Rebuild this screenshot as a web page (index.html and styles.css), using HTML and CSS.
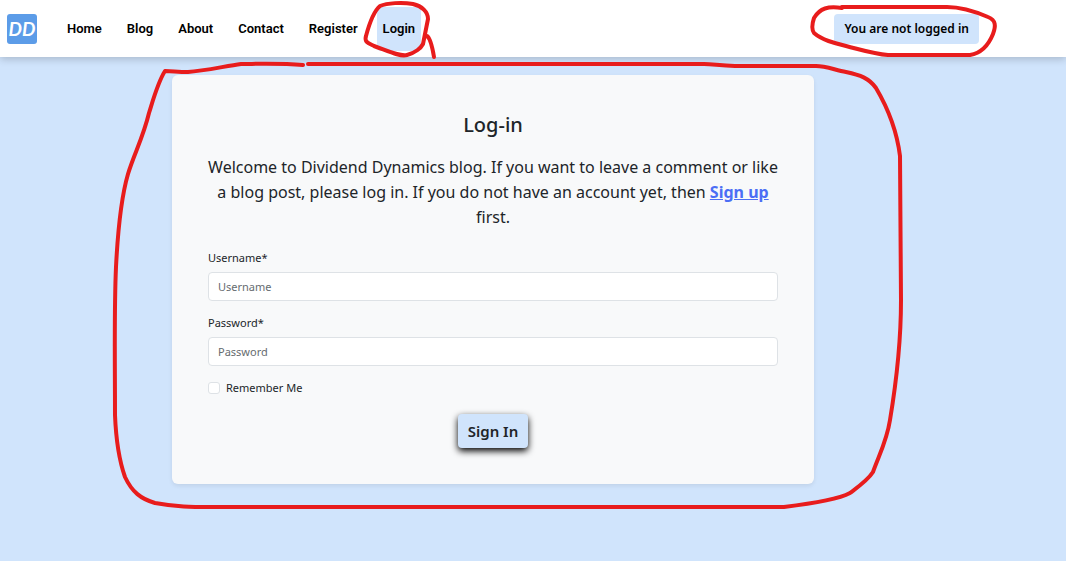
FILE: index.html
```html
<!DOCTYPE html>
<html lang="en">
<head>
<meta charset="utf-8">
<meta name="viewport" content="width=device-width, initial-scale=1">
<title>Log-in - Dividend Dynamics</title>
<link rel="stylesheet" href="styles.css">
</head>
<body>
<header class="navbar">
  <a class="logo" href="#" aria-label="Dividend Dynamics">DD</a>
  <nav class="nav-links">
    <a class="nav-link" href="#">Home</a>
    <a class="nav-link" href="#">Blog</a>
    <a class="nav-link" href="#">About</a>
    <a class="nav-link" href="#">Contact</a>
    <a class="nav-link" href="#">Register</a>
    <a class="nav-link active" href="#" aria-current="page">Login</a>
  </nav>
  <div class="status">You are not logged in</div>
</header>
<main class="page">
  <section class="card">
    <h1 class="title">Log-in</h1>
    <p class="intro">Welcome to Dividend Dynamics blog. If you want to leave a comment or like a blog post, please log in. If you do not have an account yet, then <a class="signup" href="#">Sign up</a> first.</p>
    <form class="form">
      <div class="field">
        <label for="username">Username*</label>
        <input class="text-input" id="username" type="text" placeholder="Username">
      </div>
      <div class="field">
        <label for="password">Password*</label>
        <input class="text-input" id="password" type="password" placeholder="Password">
      </div>
      <div class="remember">
        <input class="check" id="remember" type="checkbox">
        <label for="remember">Remember Me</label>
      </div>
      <button class="submit" type="submit">Sign In</button>
    </form>
  </section>
</main>
<svg class="marks" width="1066" height="561" viewBox="0 0 1066 561" aria-hidden="true">
  <path d="M413 4C402 2 387 3 380 6C374 11 370 21 366 36C364 42 368 43 374 46C388 51 400 57 407 55C415 53 421 48 423 44L428 19C428 12 422 6 413 4"/>
  <path d="M427 36C430 38 432 45 434 57"/>
  <path d="M842 8C828 6 820 8 814 18C812 24 812 30 814 33C822 40 834 43 846 46C862 50 874 54 888 55L970 55C982 53 989 44 993 34C996 26 996 20 988 17C974 11 960 7 947 7L842 7"/>
  <path d="M303 65C280 63 255 64 241 64C226 66 204 71 188 72C178 72 172 71 165 71C158 82 154 97 149 113C143 138 134 154 128 174C121 198 118 227 116 267C114 310 115 360 115 415C116 440 119 460 125 477C132 492 141 499 155 503C177 507 190 507 213 507L783 507C800 505 835 501 850 493C858 487 868 480 873 472C880 453 887 440 890 420C895 390 901 350 901 300L900 156C897 132 889 110 876 88C869 78 860 75 846 72C835 70 826 66 816 66L735 66C720 66 714 64 704 64L308 64"/>
</svg>
</body>
</html>
```
FILE: styles.css
```css
* {
  box-sizing: border-box;
}

body {
  margin: 0;
  min-height: 100vh;
  background: #d0e4fc;
  color: #212529;
  font-family: "Segoe UI", "Noto Sans", sans-serif;
  font-size: 11px;
}

.navbar {
  display: flex;
  align-items: center;
  height: 57px;
  padding: 0 87px 0 7px;
  background: #fff;
  box-shadow: 0 2px 8px rgba(0, 0, 0, 0.2);
}

.logo {
  width: 30px;
  height: 30px;
  border-radius: 3px;
  background: #5c9ce8;
  color: #fff;
  font: italic bold 19px/30px Lato, sans-serif;
  text-align: center;
  text-decoration: none;
}

.nav-links {
  display: flex;
  gap: 13px;
  margin-left: 24px;
}

.nav-link {
  padding: 0 6px;
  border-radius: 4px;
  color: #000;
  font: 600 13px/44px Roboto, sans-serif;
  text-decoration: none;
}

.nav-link.active {
  background: #d0e4fc;
}

.status {
  margin-left: auto;
  padding: 0 10px;
  border-radius: 4px;
  background: #d0e4fc;
  color: #000;
  font-size: 12px;
  font-weight: 600;
  line-height: 30px;
}

.page {
  display: grid;
  grid-template-columns: 172fr 642fr 252fr;
  padding: 18px 0;
}

.card {
  grid-column: 2;
  padding: 36px;
  border-radius: 6px;
  background: #f8f9fa;
  box-shadow: 0 2px 4px rgba(0, 0, 0, 0.08);
}

.title {
  margin: 0 0 16px;
  font-size: 20px;
  font-weight: 500;
  line-height: 28px;
  text-align: center;
}

.intro {
  margin: 0 0 19px;
  font-size: 16px;
  font-weight: 400;
  line-height: 25px;
  text-align: center;
}

.signup {
  color: #4c6ef5;
  font-weight: 700;
}

.form {
  display: flex;
  flex-direction: column;
}

.field {
  display: flex;
  flex-direction: column;
  gap: 5px;
  margin-bottom: 13px;
  line-height: 18px;
}

.text-input {
  width: 100%;
  height: 29px;
  padding: 0 9px;
  border: 1px solid #dee2e6;
  border-radius: 4px;
  background: #fff;
  color: #212529;
  font: inherit;
}

.text-input::placeholder {
  color: #666b70;
  opacity: 1;
}

.remember {
  display: flex;
  align-items: center;
  gap: 6px;
  line-height: 18px;
}

.check {
  appearance: none;
  width: 12px;
  height: 12px;
  margin: 0;
  border: 1px solid #dee2e6;
  border-radius: 3px;
  background: #fff;
}

.submit {
  align-self: center;
  margin-top: 17px;
  padding: 0 10px;
  border: 0;
  border-radius: 4px;
  background: #d0e4fc;
  box-shadow: 0 3px 7px #000;
  color: #212529;
  font: 600 15px/34px "Segoe UI", "Noto Sans", sans-serif;
}

.marks {
  position: absolute;
  top: 0;
  left: 0;
  fill: none;
  stroke: #e81c1c;
  stroke-width: 4;
  stroke-linecap: round;
  stroke-linejoin: round;
  pointer-events: none;
}
```
